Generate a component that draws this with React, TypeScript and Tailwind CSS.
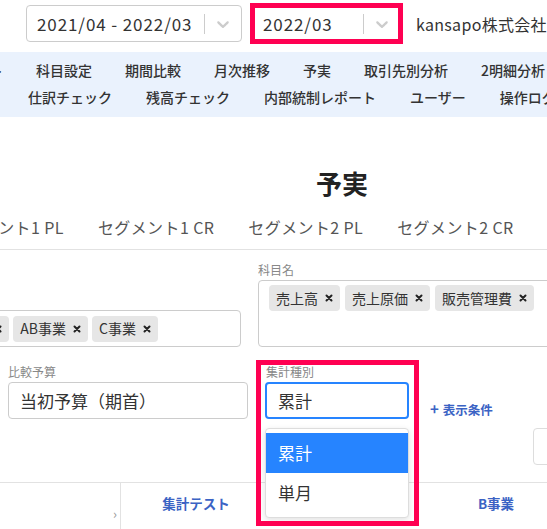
import React from 'react';

const font = { fontFamily: '"Noto Sans CJK JP", "Noto Sans", sans-serif' };

function Chevron() {
  return (
    <svg width="20" height="20" viewBox="0 0 20 20" fill="#cccccc">
      <path d="M4.516 7.548c0.436-0.446 1.043-0.481 1.576 0l3.908 3.747 3.908-3.747c0.533-0.481 1.141-0.446 1.574 0 0.436 0.445 0.408 1.197 0 1.615-0.406 0.418-4.695 4.502-4.695 4.502-0.217 0.223-0.502 0.335-0.787 0.335s-0.57-0.112-0.789-0.335c0 0-4.287-4.084-4.695-4.502s-0.436-1.17 0-1.615z" />
    </svg>
  );
}

function Cross() {
  return (
    <svg width="8" height="8" viewBox="0 0 8 8" stroke="#222" strokeWidth={2} strokeLinecap="round">
      <path d="M1.5 1.5l5 5M6.5 1.5l-5 5" />
    </svg>
  );
}

function Tag({ label }: { label: string }) {
  return (
    <div className="flex items-center h-[26px] bg-[#e6e6e6] rounded-sm shrink-0">
      <span className="pl-[7px] text-[14px] text-[#333]">{label}</span>
      <span className="w-[22px] flex items-center justify-center">
        <Cross />
      </span>
    </div>
  );
}

function PeriodSelect({ value, width }: { value: string; width: string }) {
  return (
    <div className={`${width} h-[37px] border border-[#cccccc] rounded flex items-center shrink-0`}>
      <span className="flex-1 pl-[10px] text-[17px] tracking-[0.9px] text-[#333] whitespace-nowrap">{value}</span>
      <span className="w-px h-[20px] bg-[#cccccc]" />
      <span className="px-[8px] flex items-center">
        <Chevron />
      </span>
    </div>
  );
}

const navRow1 = ['ト', '科目設定', '期間比較', '月次推移', '予実', '取引先別分析', '2明細分析'];
const navRow2 = ['仕訳チェック', '残高チェック', '内部統制レポート', 'ユーザー', '操作ログ'];
const tabs = ['セグメント1 PL', 'セグメント1 CR', 'セグメント2 PL', 'セグメント2 CR'];

export default function App() {
  return (
    <div className="relative w-[547px] h-[529px] overflow-hidden bg-white" style={font}>
      {/* header */}
      <div className="flex items-start pt-[5px] pl-[26px] h-[52px]">
        <PeriodSelect value="2021/04 - 2022/03" width="w-[216px]" />
        <div className="ml-[10px]">
          <PeriodSelect value="2022/03" width="w-[149px]" />
        </div>
        <span className="ml-[15px] mt-[7px] text-[16px] tracking-[0.3px] text-[#333] whitespace-nowrap">kansapo株式会社</span>
      </div>

      {/* nav */}
      <div className="bg-[#eaf2fd] h-[65px] pt-[4px] text-[14px] font-medium text-[#333]">
        <div className="flex h-[28px] items-center gap-[33px] ml-[-11px] whitespace-nowrap">
          {navRow1.map((n) => (
            <span key={n}>{n}</span>
          ))}
        </div>
        <div className="flex h-[27px] items-center gap-[34px] pl-[28px] whitespace-nowrap">
          {navRow2.map((n) => (
            <span key={n}>{n}</span>
          ))}
        </div>
      </div>

      {/* title */}
      <div className="mt-[49px] pl-[316px] text-[26px] font-bold text-[#222] leading-[34px]">予実</div>

      {/* tabs */}
      <div className="flex gap-[34px] ml-[-51px] pt-[15px] pb-[10px] border-b border-[#e2e2e2] text-[16px] tracking-[0.4px] text-[#555] whitespace-nowrap">
        {tabs.map((t) => (
          <span key={t} className="shrink-0">{t}</span>
        ))}
      </div>

      {/* filters row 1 */}
      <div className="flex items-end mt-[12px]">
        <div className="w-[330px] shrink-0 h-[37px] border border-[#cccccc] rounded flex items-center gap-[4px] justify-end pr-[82px] ml-[-89px]">
          <Tag label="A事業" />
          <Tag label="AB事業" />
          <Tag label="C事業" />
        </div>
        <div className="ml-[17px] shrink-0">
          <div className="text-[12px] leading-[16px] text-[#888] mb-[2px]">科目名</div>
          <div className="w-[320px] h-[67px] border border-[#cccccc] rounded flex items-start gap-[5px] pl-[10px] pt-[4px]">
            <Tag label="売上高" />
            <Tag label="売上原価" />
            <Tag label="販売管理費" />
          </div>
        </div>
      </div>

      {/* filters row 2 */}
      <div className="flex items-end mt-[17px]">
        <div className="ml-[8px] w-[240px] shrink-0">
          <div className="text-[12px] leading-[16px] text-[#888] mb-[2px]">比較予算</div>
          <div className="h-[37px] border border-[#cccccc] rounded flex items-center pl-[11px] text-[17px] text-[#333]">
            当初予算（期首）
          </div>
        </div>
        <div className="relative ml-[17px] w-[144px] shrink-0">
          <div className="text-[12px] leading-[16px] text-[#888] mb-[2px] pl-px">集計種別</div>
          <div className="h-[37px] border-2 border-[#2684ff] rounded flex items-center pl-[11px] text-[17px] text-[#333]">
            累計
          </div>
          <div className="absolute left-0 right-0 top-[calc(100%+9px)] z-10 bg-white rounded border border-[#dddddd] shadow-[0_2px_6px_rgba(0,0,0,0.12)] py-[4px] text-[17px]">
            <div className="h-[40px] flex items-center pl-[12px] bg-[#2684ff] text-white">累計</div>
            <div className="h-[40px] flex items-center pl-[12px] text-[#333]">単月</div>
          </div>
        </div>
        <div className="ml-[21px] pb-[1px] text-[12.5px] font-bold text-[#3b63c4] leading-[16px] whitespace-nowrap">
          <span className="text-[15px] mr-[4px]">+</span>表示条件
        </div>
      </div>

      {/* partial control */}
      <div className="mt-[9px] ml-[533px] w-[40px] h-[37px] border border-[#dddddd] rounded" />

      {/* table header */}
      <div className="mt-[17px] border-t border-[#e2e2e2] flex h-[60px]">
        <div className="w-[121px] shrink-0 border-r border-[#e2e2e2] flex items-end justify-end pr-[3px] pb-[19px] text-[#999] text-[13px]">
          ›
        </div>
        <div className="w-[150px] shrink-0 pt-[10px] text-center text-[13.5px] font-bold text-[#3b63c4]">集計テスト</div>
        <div className="w-[150px] shrink-0" />
        <div className="w-[150px] shrink-0 pt-[10px] text-center text-[13.5px] font-bold text-[#3b63c4]">B事業</div>
      </div>

      {/* annotation boxes */}
      <div className="absolute left-[250px] top-[3px] w-[153px] h-[41px] border-[5px] border-[#ff0052] pointer-events-none" />
      <div className="absolute left-[256px] top-[360px] w-[163px] h-[166px] border-[5px] border-[#ff0052] pointer-events-none z-20" />
    </div>
  );
}
